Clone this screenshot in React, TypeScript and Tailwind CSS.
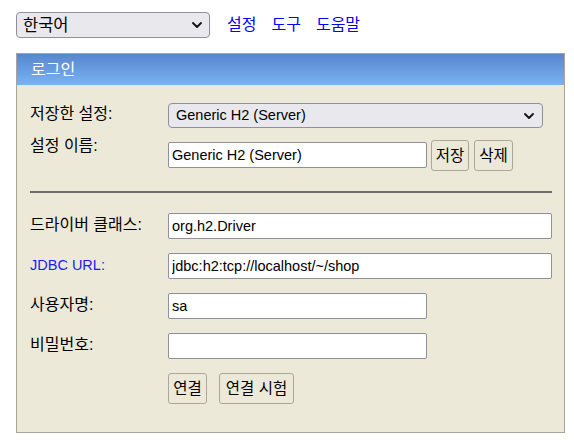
import React from "react";

function Chevron({ className }: { className: string }) {
  return (
    <svg
      viewBox="0 0 10 6"
      className={"pointer-events-none absolute " + className}
      fill="none"
      stroke="#111"
      strokeWidth="1.8"
      strokeLinecap="round"
      strokeLinejoin="round"
    >
      <polyline points="1,1 5,5 9,1" />
    </svg>
  );
}

function Field({ label, value, wide, labelClass }: { label: string; value: string; wide?: boolean; labelClass?: string }) {
  return (
    <div className="flex items-start">
      <div className={"w-[138px] pt-[2px] leading-[20px] " + (labelClass ?? "")}>{label}</div>
      <input
        type="text"
        defaultValue={value}
        className={
          "h-[26px] rounded-[2px] border border-[#8f8f9d] bg-white pl-[3px] text-[14.5px] text-black outline-none " +
          (wide ? "w-[384px]" : "w-[259px]")
        }
      />
    </div>
  );
}

function Btn({ children, w }: { children: React.ReactNode; w: string }) {
  return (
    <button
      type="button"
      className={"h-[31px] rounded-[3px] border border-[#aaa79c] bg-[#ece9d8] px-0 text-[15.5px] leading-none text-black " + w}
    >
      {children}
    </button>
  );
}

export default function App() {
  return (
    <div className="min-h-screen bg-white pl-[16px] pt-[12px] font-['Liberation_Sans','Noto_Sans_CJK_KR',sans-serif] text-[16px] text-black">
      <div className="flex items-center">
        <div className="relative">
          <select className="h-[26px] w-[194px] appearance-none rounded-[4px] border border-[#8f8f9d] bg-[#e9e9ed] pl-[6px] text-[16.5px] text-black outline-none">
            <option>한국어</option>
          </select>
          <Chevron className="right-[8px] top-[10px] h-[6px] w-[10px]" />
        </div>
        <div className="ml-[17px] flex gap-[15px] text-[#0000ff]">
          <a href="#">설정</a>
          <a href="#">도구</a>
          <a href="#">도움말</a>
        </div>
      </div>

      <div className="mt-[15px] w-[549px] border border-[#a8a597] bg-[#ece9d8]">
        <div className="flex h-[31px] items-center bg-gradient-to-b from-[#5886cc] to-[#79b3f4] pl-[14px] text-white">
          로그인
        </div>

        <div className="flex flex-col pb-[28px] pl-[13px] pt-[18px]">
          <div className="flex items-start">
            <div className="w-[138px] pt-[1px] leading-[20px]">저장한 설정:</div>
            <div className="relative">
              <select className="h-[25px] w-[375px] appearance-none rounded-[4px] border border-[#8f8f9d] bg-[#e9e9ed] pl-[7px] text-[14.5px] text-black outline-none">
                <option>Generic H2 (Server)</option>
              </select>
              <Chevron className="right-[9px] top-[10px] h-[6px] w-[10px]" />
            </div>
          </div>

          <div className="mt-[12px] flex items-start">
            <div className="-mt-[4px] w-[138px] leading-[20px]">설정 이름:</div>
            <input
              type="text"
              defaultValue="Generic H2 (Server)"
              className="mt-[2px] h-[26px] w-[259px] rounded-[2px] border border-[#8f8f9d] bg-white pl-[3px] text-[14.5px] text-black outline-none"
            />
            <div className="ml-[4px] flex gap-[5px]">
              <Btn w="w-[38px]">저장</Btn>
              <Btn w="w-[39px]">삭제</Btn>
            </div>
          </div>

          <div className="mt-[20px] h-[2px] w-[522px] bg-[#6e6e6e]" />

          <div className="mt-[20px] flex flex-col gap-[14px]">
            <Field label="드라이버 클래스:" value="org.h2.Driver" wide />
            <Field label="JDBC URL:" value="jdbc:h2:tcp://localhost/~/shop" wide labelClass="text-[14.5px] text-[#1a1aff]" />
            <Field label="사용자명:" value="sa" />
            <Field label="비밀번호:" value="" />
          </div>

          <div className="mt-[14px] flex gap-[12px] pl-[138px]">
            <Btn w="w-[39px]">연결</Btn>
            <Btn w="w-[75px]">연결 시험</Btn>
          </div>
        </div>
      </div>
    </div>
  );
}
